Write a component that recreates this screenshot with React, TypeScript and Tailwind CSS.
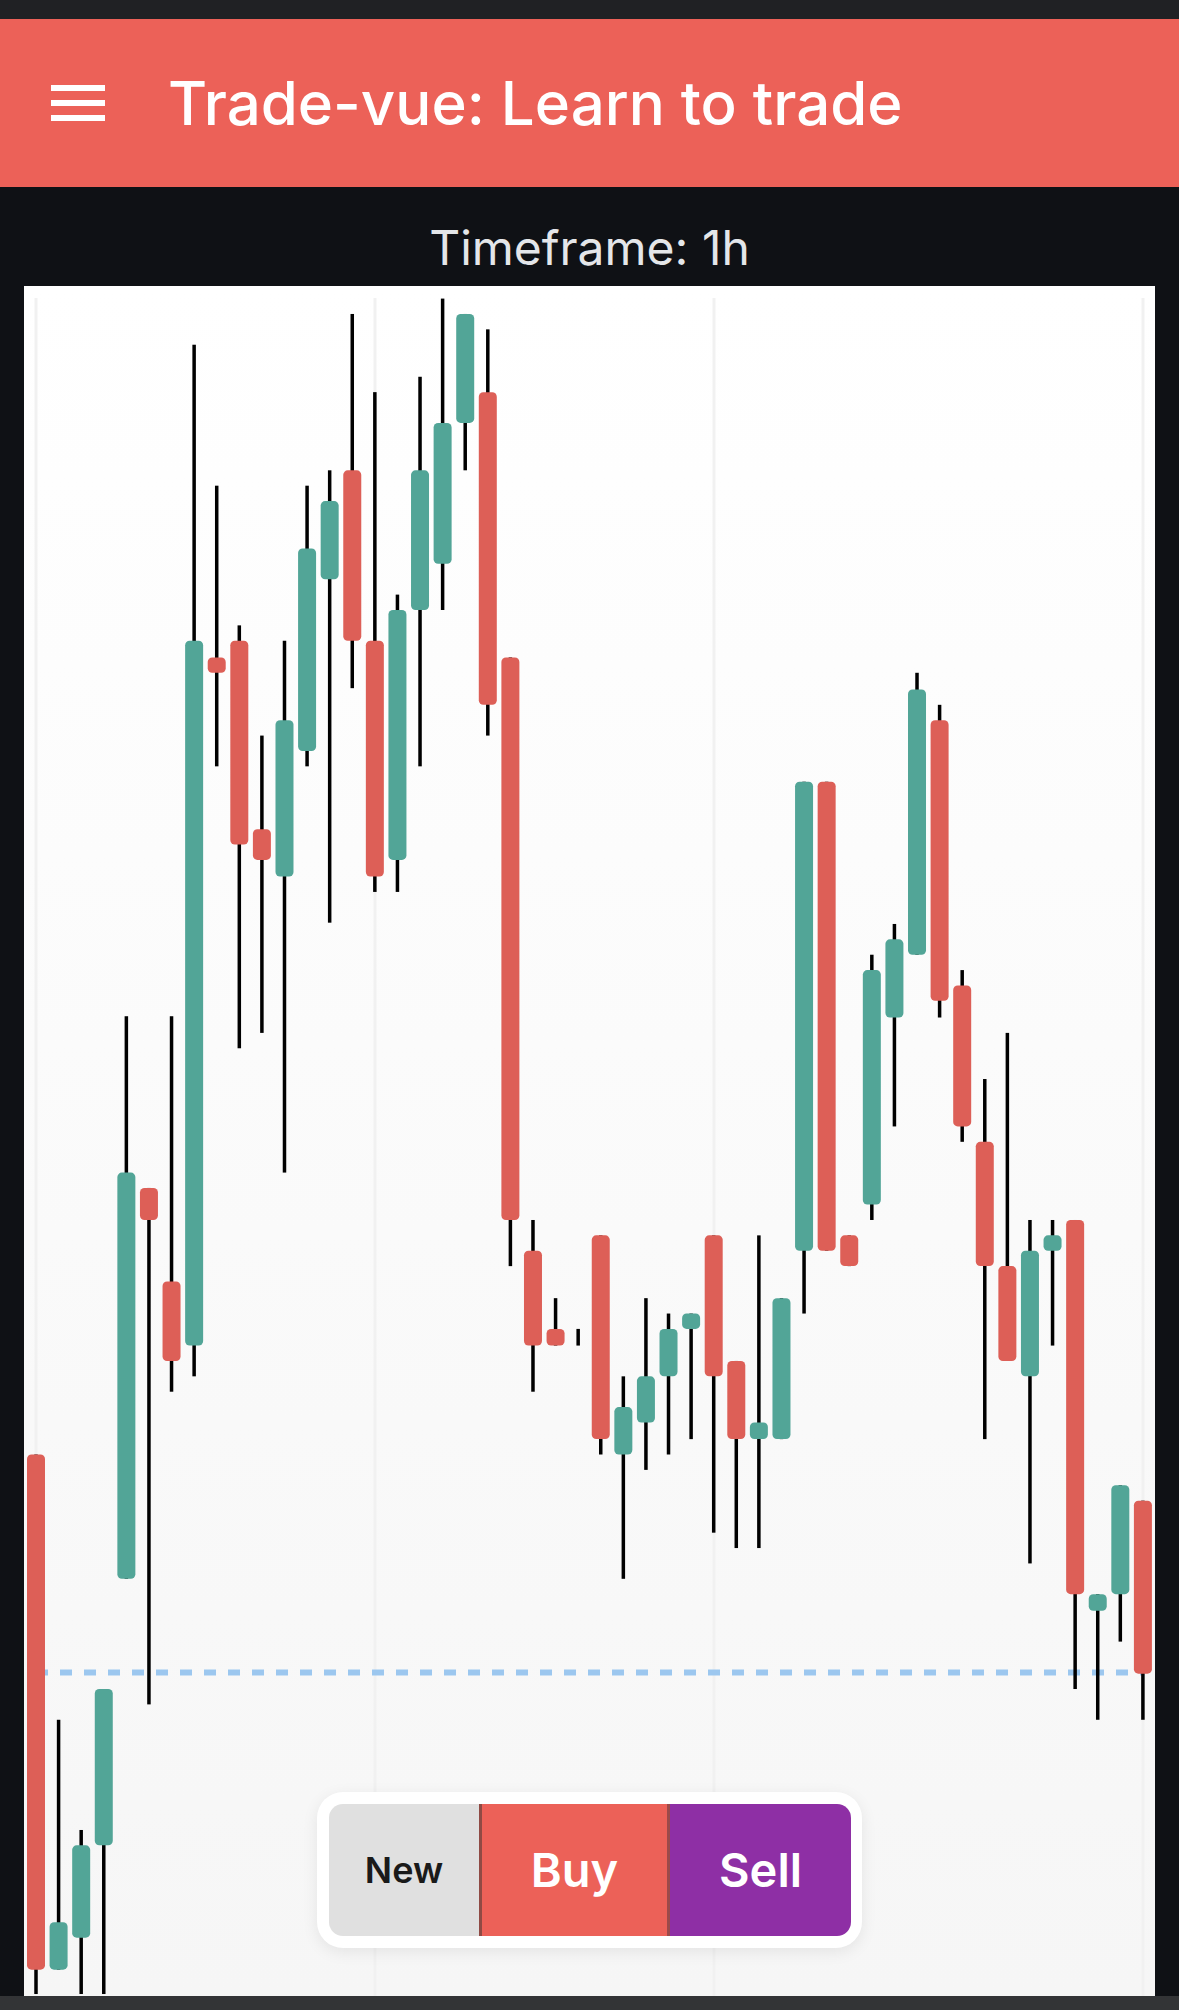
const RED = "#dd5f57";
const GREEN = "#52a597";

// candles in a 920 wide scale: [green?, bodyTop, bodyBottom, wickTop, wickBottom]
const candles: [number, number, number, number, number][] = [
  [0, 1135, 1537, 1135, 1556],
  [1, 1500, 1537, 1342, 1537],
  [1, 1440, 1512, 1428, 1556],
  [1, 1318, 1440, 1318, 1556],
  [1, 915, 1232, 793, 1232],
  [0, 927, 952, 927, 1330],
  [0, 1000, 1062, 793, 1086],
  [1, 500, 1050, 269, 1074],
  [0, 513, 525, 379, 598],
  [0, 500, 659, 488, 818],
  [0, 647, 671, 574, 806],
  [1, 562, 684, 500, 915],
  [1, 428, 586, 379, 598],
  [1, 391, 452, 367, 720],
  [0, 367, 500, 245, 537],
  [0, 500, 684, 306, 696],
  [1, 476, 671, 464, 696],
  [1, 367, 476, 294, 598],
  [1, 330, 440, 233, 476],
  [1, 245, 330, 245, 367],
  [0, 306, 550, 257, 574],
  [0, 513, 952, 513, 988],
  [0, 976, 1050, 952, 1086],
  [0, 1037, 1050, 1013, 1050],
  [0, 1037, 1037, 1037, 1050],
  [0, 964, 1123, 964, 1135],
  [1, 1098, 1135, 1074, 1232],
  [1, 1074, 1110, 1013, 1147],
  [1, 1037, 1074, 1025, 1135],
  [1, 1025, 1037, 1025, 1123],
  [0, 964, 1074, 964, 1196],
  [0, 1062, 1123, 1062, 1208],
  [1, 1110, 1123, 964, 1208],
  [1, 1013, 1123, 1013, 1123],
  [1, 610, 976, 610, 1025],
  [0, 610, 976, 610, 976],
  [0, 964, 988, 964, 988],
  [1, 757, 940, 745, 952],
  [1, 733, 794, 721, 879],
  [1, 538, 745, 525, 745],
  [0, 562, 781, 550, 794],
  [0, 769, 879, 757, 891],
  [0, 891, 988, 842, 1123],
  [0, 988, 1062, 806, 1062],
  [1, 976, 1074, 952, 1220],
  [1, 964, 976, 952, 1050],
  [0, 952, 1244, 952, 1318],
  [1, 1244, 1257, 1244, 1342],
  [1, 1159, 1244, 1159, 1281],
  [0, 1171, 1306, 1171, 1342],
];

const toY = (v: number) => v * 1.2815 - 286;
const toX = (i: number) => 12 + i * 22.59;

const Chart = () => (
  <svg viewBox="0 0 1131 1710" className="block w-[1131px] h-[1710px]">
    {[12, 351, 690, 1119].map((x) => (
      <line key={x} x1={x} x2={x} y1={12} y2={1710} stroke="#f1f1f1" strokeWidth={3} />
    ))}
    <line x1={12} x2={1119} y1={1386.5} y2={1386.5} stroke="#9cc7ef" strokeWidth={6} strokeDasharray="12 12" />
    {candles.map(([up, top, bottom, wickTop, wickBottom], i) => (
      <g key={i}>
        <rect x={toX(i) - 1.75} y={toY(wickTop)} width={3.5} height={toY(wickBottom) - toY(wickTop)} fill="#000" />
        {bottom > top && (
          <rect x={toX(i) - 9} y={toY(top)} width={18} height={toY(bottom) - toY(top)} rx={4.5} fill={up ? GREEN : RED} />
        )}
      </g>
    ))}
  </svg>
);

export default function App() {
  return (
    <div className="w-[1179px] h-[2010px] flex flex-col overflow-hidden bg-[#0f1115] font-['Inter',sans-serif]">
      <div className="h-[19px] bg-[#202124]" />

      <header className="h-[168px] bg-[#ec6158] flex items-center pl-[51px] gap-[63px] text-white">
        <div className="w-[54px] flex flex-col gap-[9px]">
          <span className="h-[6px] bg-white" />
          <span className="h-[6px] bg-white" />
          <span className="h-[6px] bg-white" />
        </div>
        <h1 className="text-[60px] font-medium leading-none">Trade-vue: Learn to trade</h1>
      </header>

      <div className="h-[99px] flex items-end justify-center pb-[14px] text-[48px] leading-none text-[#e4e6e9]">
        Timeframe: 1h
      </div>

      <div className="relative mx-[24px] w-[1131px] h-[1710px] bg-gradient-to-b from-white to-[#f6f6f6]">
        <Chart />
        <div className="absolute left-[293px] top-[1506px] w-[545px] h-[156px] py-[12px] pl-[12px] pr-[11px] bg-white rounded-[26px] shadow-[0_4px_16px_rgba(0,0,0,0.08)]">
          <div className="flex h-full rounded-[14px] overflow-hidden text-white font-semibold">
            <button className="w-[153px] bg-[#e0e0e0] text-[#1a1a1a] text-[36px] border-r-[3px] border-[#8f4a44]">New</button>
            <button className="w-[188px] bg-[#ec6158] text-[47px] border-r-[3px] border-[#9c4a4a]">Buy</button>
            <button className="flex-1 bg-[#8e2fa5] text-[47px]">Sell</button>
          </div>
        </div>
      </div>

      <div className="flex-1 bg-[#333436]" />
    </div>
  );
}
